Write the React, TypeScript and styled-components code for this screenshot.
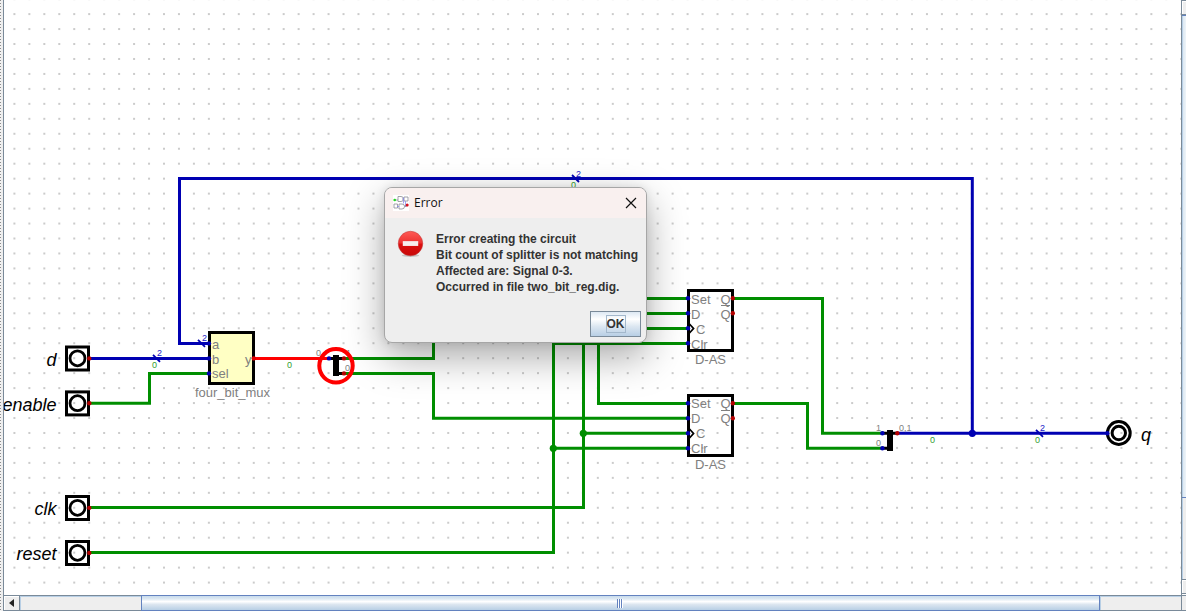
import React from 'react';
import styled, { createGlobalStyle } from 'styled-components';

const GlobalStyle = createGlobalStyle`
  * { box-sizing: border-box; }
  body { margin: 0; background: #fff; font-family: "Liberation Sans", Arial, sans-serif; }
`;

const steel = '#7a8a99';
const metalBlue = '#6382bf';

const Page = styled.main`
  display: flex;
  height: 100vh;
  overflow: hidden;
`;

const Divider = styled.div`
  flex: none;
  width: 4px;
  border-right: 1px solid ${steel};
  background:
    linear-gradient(90deg, transparent 1px, #eee 1px),
    repeating-linear-gradient(#8c8c8c 0 1px, #f4f4f4 1px 3px);
`;

const ScrollPane = styled.section`
  flex: 1;
  min-width: 0;
  display: grid;
  grid-template-columns: minmax(0, 1fr) 5px;
  grid-template-rows: minmax(0, 1fr) 16px;
`;

const Viewport = styled.div`
  position: relative;
  overflow: hidden;
`;

const Drawing = styled.svg`
  display: block;
  width: 100%;
  height: 100%;
  font-family: "Liberation Sans", Arial, sans-serif;
`;

const VerticalBar = styled.div`
  display: flex;
  flex-direction: column;
  overflow: hidden;
  border-left: 1px solid ${steel};
  padding-bottom: 1px;
`;

const HorizontalBar = styled.div`
  display: flex;
  border: solid ${steel};
  border-width: 1px 0;
`;

const ArrowButton = styled.button<{ $vertical?: boolean }>`
  flex: none;
  display: flex;
  align-items: center;
  justify-content: center;
  width: ${(p) => (p.$vertical ? '5px' : '16px')};
  height: ${(p) => (p.$vertical ? '15px' : '14px')};
  padding: 0;
  border: 0 solid ${steel};
  border-width: ${(p) => (p.$vertical ? '1px 0' : '0 1px 0 0')};
  background: #eee;
  box-shadow: inset 1px 1px #fff;
`;

const Track = styled.div<{ $grow: number; $vertical?: boolean }>`
  flex: ${(p) => p.$grow} 1 0;
  background: #eee;
  box-shadow: inset ${(p) => (p.$vertical ? '1px 0' : '1px 1px')} #b8cfe5;
`;

const Thumb = styled.div<{ $grow: number; $vertical?: boolean }>`
  flex: ${(p) => p.$grow} 1 0;
  display: flex;
  align-items: center;
  justify-content: center;
  margin: ${(p) => (p.$vertical ? '0 0 0 -1px' : '-1px 0')};
  border: 1px solid ${metalBlue};
  border-right-width: ${(p) => (p.$vertical ? 0 : '1px')};
  background: ${(p) =>
    p.$vertical
      ? 'linear-gradient(90deg, #b8cfe5 0 1px, #dce8f2 1px, #f4f8fb 5px)'
      : 'linear-gradient(#c8dbec 0, #dce8f2 20%, #fff 40%, #dce6f0 60%, #b8cfe5 100%)'};
`;

const Grip = styled.i`
  width: 6px;
  height: 9px;
  background: repeating-linear-gradient(90deg, ${metalBlue} 0 1px, #fff 1px 2px);
`;

const Corner = styled.div`
  border: solid ${steel};
  border-width: 1px 0 1px 1px;
  background: #eee;
`;

const Dialog = styled.div`
  position: absolute;
  left: 380px;
  top: 187px;
  width: 263px;
  border: 1px solid #a6a6a6;
  border-radius: 8px;
  overflow: hidden;
  background: #eee;
  box-shadow: 0 14px 38px rgba(0, 0, 0, 0.34), 0 0 10px rgba(0, 0, 0, 0.1);
`;

const TitleBar = styled.header`
  display: flex;
  align-items: center;
  gap: 5px;
  height: 30px;
  padding: 0 8px;
  background: #f9f0ef;
`;

const Title = styled.h1`
  flex: 1;
  margin: 0;
  font: 400 12px/16px "Open Sans", "Noto Sans", sans-serif;
  color: #111;
`;

const CloseButton = styled.button`
  display: flex;
  padding: 1px;
  border: 0;
  background: none;
`;

const Message = styled.div`
  display: flex;
  align-items: flex-start;
  gap: 12px;
  padding: 12px 8px 0 12px;
`;

const MessageText = styled.p`
  margin: 0;
  padding-top: 1px;
  font: 700 12px/16px "Liberation Sans", Arial, sans-serif;
  color: #333;
  white-space: pre;
`;

const Actions = styled.footer`
  display: flex;
  justify-content: flex-end;
  padding: 16px 5px 5px;
`;

const OkButton = styled.button`
  display: flex;
  align-items: center;
  justify-content: center;
  width: 51px;
  height: 26px;
  padding: 0;
  border: 1px solid ${steel};
  background: linear-gradient(#dde8f3 0, #fff 30%, #dce7f1 60%, #b8cfe5 100%);
  font: 700 12px/16px "Liberation Sans", Arial, sans-serif;
  color: #333;
`;

const FocusRing = styled.span`
  border: 1px solid #a3b8cc;
`;

const Wire = styled.path<{ $color: string }>`
  fill: none;
  stroke: ${(p) => p.$color};
  stroke-width: 3px;
`;

const PinLabel = styled.text`
  font-size: 18px;
  font-style: italic;
`;

const PartLabel = styled.text`
  font-size: 13px;
  fill: #808080;
`;

const SmallLabel = styled.text<{ $color?: string }>`
  font-size: 9px;
  fill: ${(p) => p.$color || '#808080'};
`;

const blue = '#0000b2';
const green = '#008e00';
const valueGreen = '#32a032';
const pinRed = '#b40000';

const Dot = ({ x, y, color, r = 2.2 }: { x: number; y: number; color: string; r?: number }) => (
  <circle cx={x} cy={y} r={r} fill={color} />
);

const InputPin = ({ y, label }: { y: number; label: string }) => (
  <g>
    <PinLabel x={56.5} y={y + 7.5} textAnchor="end">{label}</PinLabel>
    <rect x={66.5} y={y - 11.3} width={22} height={23} fill="none" stroke="#000" strokeWidth={3} />
    <circle cx={77.5} cy={y} r={7.5} fill="none" stroke="#000" strokeWidth={2.8} />
    <Dot x={89.3} y={y + 0.1} color={pinRed} />
  </g>
);

const BusMark = ({ x, y }: { x: number; y: number }) => (
  <g>
    <path d={`M${x - 4} ${y - 3.5}l7 7`} stroke={blue} strokeWidth={1.8} />
    <SmallLabel $color="#2020c8" x={x} y={y - 2}>2</SmallLabel>
  </g>
);

const FlipFlop = ({ y, textY }: { y: number; textY: number }) => (
  <g>
    <g transform={`translate(0 ${y})`}>
      <rect x={688.5} y={1.5} width={44} height={60} fill="none" stroke="#000" strokeWidth={3} />
      <path d="M689 34.5l4.500 5-4.500 5" fill="none" stroke="#000" strokeWidth={1.8} />
      <path d="M721 16.500h9" stroke="#808080" />
      {[9.3, 24.3, 39.3, 54.2].map((dy) => <Dot key={dy} x={688} y={dy} color={blue} />)}
      <Dot x={732.8} y={9.3} color={pinRed} />
      <Dot x={732.8} y={24.3} color={pinRed} />
      <PartLabel x={710.5} y={75} textAnchor="middle">D-AS</PartLabel>
    </g>
    <g transform={`translate(0 ${textY})`}>
      <PartLabel x={691} y={15}>Set</PartLabel>
      <PartLabel x={691} y={30}>D</PartLabel>
      <PartLabel x={696} y={45}>C</PartLabel>
      <PartLabel x={691} y={60}>Clr</PartLabel>
      <PartLabel x={730.5} y={15} textAnchor="end">Q</PartLabel>
      <PartLabel x={730.5} y={30} textAnchor="end">Q</PartLabel>
    </g>
  </g>
);

const Circuit = () => (
  <Drawing role="img" aria-label="Two bit register circuit">
    <defs>
      <pattern id="grid" width="14.96" height="14.96" x="9.4" y="13.1" patternUnits="userSpaceOnUse">
        <rect width="2" height="2" fill="#cbcbcb" />
      </pattern>
    </defs>
    <rect width="100%" height="100%" fill="#fff" />
    <rect width="100%" height="100%" fill="url(#grid)" />
    <g transform="translate(-4 0)">
      <rect x="209.5" y="332.5" width="44" height="51" fill="#ffffc4" />

      <Wire $color={blue} d="M209 343.4H179.5V178.5H972.3V433.3" />
      <Wire $color={blue} d="M89 358.4H209M897 433.3H1108" />
      <Wire $color={green} d="M89 403.3H149.5V373.4H209" />
      <Wire $color="#ff0000" d="M254 358.4H329" />
      <Wire $color={green} d="M344 358.4H433.5V313.4H688" />
      <Wire $color={green} d="M344 373.4H433.5V418.3H688" />
      <Wire $color={green} d="M688 298.4H598.5V403.4H688" />
      <Wire $color={green} d="M89 507.5H583.5V328.4H688M583.5 433.3H688" />
      <Wire $color={green} d="M89 552.5H553.5V343.4H688M553.5 448.3H688" />
      <Wire $color={green} d="M733 298.4H822.5V433.3H882" />
      <Wire $color={green} d="M733 403.4H807.5V448.3H882" />
      <Dot x={583.3} y={433.3} color={green} r={3.6} />
      <Dot x={553.3} y={448.3} color={green} r={3.6} />
      <Dot x={972.3} y={433.3} color={blue} r={3.6} />

      <InputPin y={358.3} label="d" />
      <InputPin y={403.2} label="enable" />
      <InputPin y={507.8} label="clk" />
      <InputPin y={552.8} label="reset" />

      <rect x="209.5" y="332.5" width="44" height="51" fill="none" stroke="#000" strokeWidth="3" />
      <PartLabel x={212} y={349}>a</PartLabel>
      <PartLabel x={212} y={364}>b</PartLabel>
      <PartLabel x={212} y={378}>sel</PartLabel>
      <PartLabel x={251.5} y={364} textAnchor="end">y</PartLabel>
      <PartLabel x={232.5} y={397} textAnchor="middle">four_bit_mux</PartLabel>
      <Dot x={209} y={343.4} color={blue} />
      <Dot x={209} y={358.4} color={blue} />
      <Dot x={209} y={373.4} color={blue} />
      <Dot x={253.8} y={358.4} color="#dc0000" />

      <path d="M329 358.4H344M336 373.4H344" stroke="#000" strokeWidth="3" />
      <path d="M336 355V376" stroke="#000" strokeWidth="6" />
      <SmallLabel x={316} y={356}>0</SmallLabel>
      <SmallLabel x={346} y={356}>1</SmallLabel>
      <SmallLabel x={345} y={371}>0</SmallLabel>
      <Dot x={329} y={358.4} color={blue} />
      <Dot x={344} y={358.4} color={pinRed} />
      <Dot x={344} y={373.4} color={pinRed} />
      <circle cx="336" cy="365.8" r="16.7" fill="none" stroke="#ff0000" strokeWidth="4" />

      <FlipFlop y={289} textY={289} />
      <FlipFlop y={394} textY={393} />

      <path d="M882 433.3H897M882 448.3H890" stroke="#000" strokeWidth="3" />
      <path d="M890 430V451" stroke="#000" strokeWidth="6" />
      <SmallLabel x={876} y={431}>1</SmallLabel>
      <SmallLabel x={876} y={446}>0</SmallLabel>
      <SmallLabel x={899} y={431}>0,1</SmallLabel>
      <Dot x={882.4} y={433.3} color={blue} />
      <Dot x={882.4} y={448.3} color={blue} />
      <Dot x={897.3} y={433.3} color={pinRed} />

      <BusMark x={157} y={358.4} />
      <BusMark x={202} y={343.4} />
      <BusMark x={576} y={178.5} />
      <BusMark x={1040} y={433.3} />
      <SmallLabel $color={valueGreen} x={152} y={368}>0</SmallLabel>
      <SmallLabel $color={valueGreen} x={287} y={368}>0</SmallLabel>
      <SmallLabel $color={valueGreen} x={571} y={188}>0</SmallLabel>
      <SmallLabel $color={valueGreen} x={930} y={443}>0</SmallLabel>
      <SmallLabel $color={valueGreen} x={1035} y={443}>0</SmallLabel>

      <circle cx="1118.8" cy="433" r="11.4" fill="none" stroke="#000" strokeWidth="3" />
      <circle cx="1118.8" cy="433" r="6.7" fill="none" stroke="#000" strokeWidth="3" />
      <Dot x={1107.4} y={433.3} color={blue} />
      <PinLabel x={1141} y={441}>q</PinLabel>
    </g>
  </Drawing>
);

const AppIcon = () => (
  <svg width="16" height="16" viewBox="0 0 16 16" aria-hidden="true">
    <rect width="16" height="16" fill="#fff" />
    <g fill="none" stroke="#8c8c94" strokeWidth="0.8">
      <path d="M5 1.5h3a2.5 2.5 0 0 1 0 5H5zM11 2h4v4h-4zM1 9h3.5v4H1zM6 9h3a2.5 2.5 0 0 1 0 5H6z" />
      <path d="M2 5h3M9 4h2" />
      <path d="M10.500 2.500v6M4 11.500h2M12.500 6v6" stroke="#8c8cf0" />
      <path d="M11.500 11h3" stroke="#777" />
    </g>
    <circle cx="1.700" cy="5" r="1.300" fill="#20d820" />
    <circle cx="14.200" cy="10" r="1.500" fill="#d81020" />
  </svg>
);

const StopIcon = () => (
  <svg width="28" height="29" viewBox="0 0 28 29" aria-hidden="true">
    <defs>
      <linearGradient id="stop" x1="0" y1="0" x2="0" y2="1">
        <stop offset="0" stopColor="#ff5a55" />
        <stop offset="0.48" stopColor="#ec3030" />
        <stop offset="0.52" stopColor="#dc1010" />
        <stop offset="1" stopColor="#c80808" />
      </linearGradient>
    </defs>
    <ellipse cx="14" cy="26" rx="9" ry="1.500" fill="#c4c4c4" />
    <circle cx="14" cy="13.500" r="12.700" fill="url(#stop)" stroke="#c43a3a" strokeWidth="0.600" />
    <rect x="6" y="11" width="16" height="5" fill="#f6eeee" />
  </svg>
);

export default function App() {
  return (
    <>
      <GlobalStyle />
      <Page>
        <Divider />
        <ScrollPane>
          <Viewport>
            <Circuit />
            <Dialog role="dialog" aria-labelledby="dialog-title">
              <TitleBar>
                <AppIcon />
                <Title id="dialog-title">Error</Title>
                <CloseButton aria-label="Close">
                  <svg width="12" height="12" viewBox="0 0 12 12">
                    <path d="M1 1l10 10M11 1L1 11" stroke="#111" strokeWidth="1.200" />
                  </svg>
                </CloseButton>
              </TitleBar>
              <Message>
                <StopIcon />
                <MessageText>
                  {'Error creating the circuit\nBit count of splitter is not matching\nAffected are: Signal 0-3.\nOccurred in file two_bit_reg.dig.'}
                </MessageText>
              </Message>
              <Actions>
                <OkButton><FocusRing>OK</FocusRing></OkButton>
              </Actions>
            </Dialog>
          </Viewport>
          <VerticalBar>
            <ArrowButton $vertical aria-label="Scroll up" />
            <Thumb $vertical $grow={482} />
            <Track $vertical $grow={81} />
            <ArrowButton $vertical aria-label="Scroll down" />
          </VerticalBar>
          <HorizontalBar>
            <ArrowButton aria-label="Scroll left">
              <svg width="5" height="8" viewBox="0 0 5 8"><path d="M5 0v8L0 4z" fill="#222" /></svg>
            </ArrowButton>
            <Track $grow={121} />
            <Thumb $grow={959}><Grip /></Thumb>
            <Track $grow={81} />
          </HorizontalBar>
          <Corner />
        </ScrollPane>
      </Page>
    </>
  );
}
